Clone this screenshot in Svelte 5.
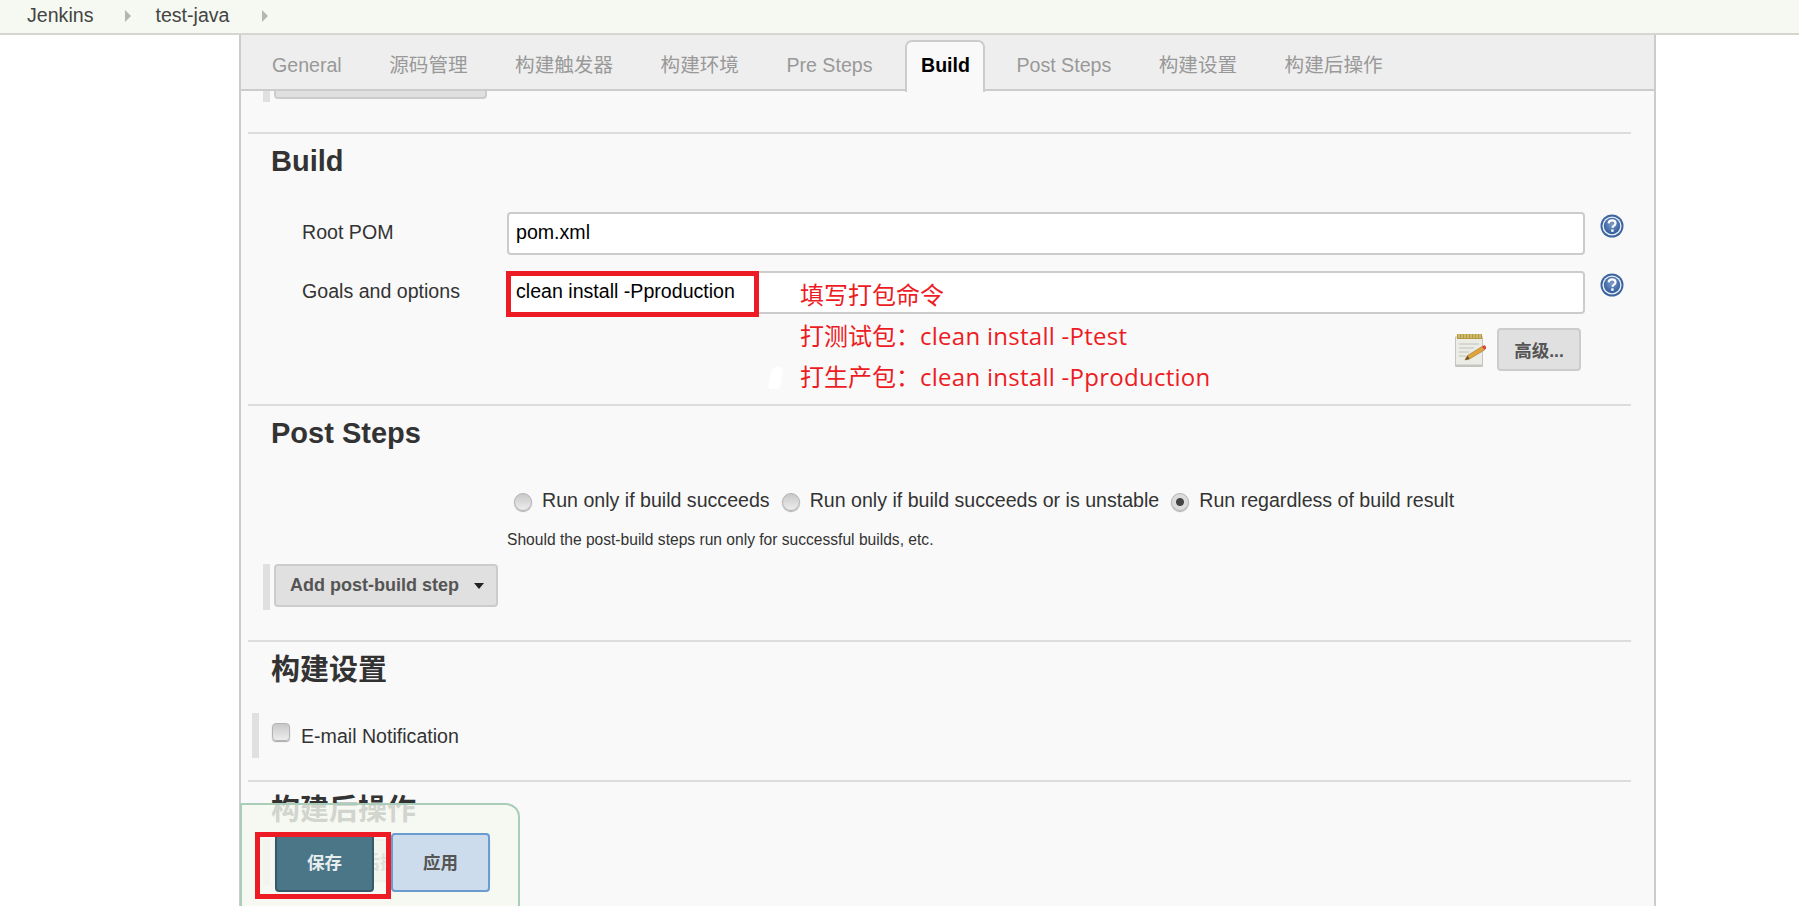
<script>
  const tabs = ['General', '源码管理', '构建触发器', '构建环境', 'Pre Steps', 'Build', 'Post Steps', '构建设置', '构建后操作'];
  const activeTab = 'Build';
  const radios = [
    { label: 'Run only if build succeeds', checked: false },
    { label: 'Run only if build succeeds or is unstable', checked: false },
    { label: 'Run regardless of build result', checked: true }
  ];
</script>

{#snippet helpIcon()}
  <svg class="help" viewBox="0 0 24 24" width="24" height="24" aria-hidden="true">
    <defs>
      <radialGradient id="helpfill" cx="50%" cy="40%" r="60%">
        <stop offset="0" stop-color="#7d9ccb" />
        <stop offset="1" stop-color="#2f5a9a" />
      </radialGradient>
    </defs>
    <circle cx="12" cy="12" r="11.5" fill="#3c659f" />
    <circle cx="12" cy="12" r="9.6" fill="#e8eef6" />
    <circle cx="12" cy="12" r="8.2" fill="url(#helpfill)" />
    <path d="M8.6 9.4c.2-2 1.7-3 3.5-3 2 0 3.4 1.1 3.4 2.8 0 1.4-.8 2-1.8 2.7-.8.5-1.1.9-1.1 1.9" fill="none" stroke="#fff" stroke-width="2.2" />
    <rect x="11.2" y="15.4" width="2.4" height="2.4" fill="#fff" />
  </svg>
{/snippet}

<header class="topbar">
  <span class="crumb">Jenkins</span>
  <span class="arrow"></span>
  <span class="crumb">test-java</span>
  <span class="arrow"></span>
</header>

<main class="panel">
  <nav class="tabbar">
    {#each tabs as tab (tab)}
      <span class="tab" class:active={tab === activeTab}>{tab}</span>
    {/each}
  </nav>

  <div class="content">
    <div class="stub"><span class="stub-btn"></span></div>

    <section>
      <h2>Build</h2>
      <div class="field first">
        <span class="label">Root POM</span>
        <input type="text" value="pom.xml" />
        {@render helpIcon()}
      </div>
      <div class="field">
        <span class="label">Goals and options</span>
        <input type="text" value="clean install -Pproduction" />
        {@render helpIcon()}
      </div>
      <div class="advanced">
        <svg class="notepad" viewBox="0 0 36 34" width="36" height="34" aria-hidden="true">
          <rect x="2" y="31" width="28" height="3" rx="1" fill="#c4c4be" />
          <rect x="2.500" y="4" width="27" height="28" fill="#ecece7" stroke="#c6c6be" />
          <rect x="4" y="1" width="25" height="5" fill="#b4993f" />
          <path d="M6 1v4M9 1v4M12 1v4M15 1v4M18 1v4M21 1v4M24 1v4M27 1v4" stroke="#e6d897" stroke-width="1" />
          <path d="M6 11h20M6 15h15M6 19h10M6 23h7" stroke="#cfcfc9" stroke-width="1.4" />
          <path d="M12 27l2.500-4.500L29 13.500l2.500 3.500L16.500 26z" fill="#dfa53c" stroke="#a4762a" stroke-width=".6" />
          <path d="M29 13.500l2-1.200c1-.4 2.500 1.800 2 3l-1.500 1.700z" fill="#d9483b" />
          <path d="M12 27l2.500-4.500 2 3.500z" fill="#6a5128" />
        </svg>
        <button class="btn adv-btn">高级...</button>
      </div>
    </section>

    <section>
      <h2>Post Steps</h2>
      <div class="radios">
        {#each radios as radio (radio.label)}
          <label class="radio">
            <input type="radio" name="post" checked={radio.checked} />
            <span>{radio.label}</span>
          </label>
        {/each}
      </div>
      <p class="hint">Should the post-build steps run only for successful builds, etc.</p>
      <div class="add-row">
        <button class="btn add-btn">Add post-build step<span class="caret"></span></button>
      </div>
    </section>

    <section>
      <h2 class="cjk">构建设置</h2>
      <label class="check">
        <input type="checkbox" />
        <span>E-mail Notification</span>
      </label>
    </section>

    <section>
      <h2 class="cjk">构建后操作</h2>
      <div class="add-row ghost">
        <button class="btn add-btn">增加构建后操作步骤</button>
      </div>
    </section>
  </div>
</main>

<!-- sticky save bar over the form -->
<div class="savebar">
  <button class="save">保存</button>
  <button class="apply">应用</button>
</div>

<!-- annotations drawn over the screenshot -->
<div class="mark goals-mark"></div>
<div class="mark save-mark"></div>
<div class="note note-1">填写打包命令</div>
<div class="note note-2">打测试包：<span class="latin">clean install -Ptest</span></div>
<div class="note note-3">打生产包：<span class="latin">clean install -Pproduction</span></div>
<div class="blob"></div>

<style>
  :global(body) {
    margin: 0;
    height: 906px;
    overflow: hidden;
    background: #fff;
    font-family: "Liberation Sans", "Noto Sans CJK SC", sans-serif;
    font-size: 19.6px;
    color: #333;
  }

  .topbar {
    display: flex;
    align-items: center;
    height: 31px;
    padding: 0 0 2px 27px;
    background: #f5f9f1;
    border-bottom: 2px solid #d3d7cf;
    color: #444;
  }

  .arrow {
    width: 0;
    height: 0;
    margin: 0 24px 0 32px;
    border-left: 6px solid #b5b5b5;
    border-top: 6px solid transparent;
    border-bottom: 6px solid transparent;
  }

  .panel {
    box-sizing: border-box;
    width: 1417px;
    height: 871px;
    margin-left: 239px;
    border-left: 2px solid #ccc;
    border-right: 2px solid #ccc;
    background: #f9f9f9;
    overflow: hidden;
  }

  .tabbar {
    display: flex;
    height: 54px;
    padding-left: 14px;
    background: #eee;
    border-bottom: 2px solid #ccc;
  }

  .tab {
    height: 50px;
    margin: 5px 12.5px 0 -1px;
    padding: 0 16px;
    line-height: 46px;
    color: #999;
    border: 2px solid transparent;
    border-bottom: 0;
  }

  .tab.active {
    background: #f9f9f9;
    color: #000;
    font-weight: bold;
    border-color: #ccc;
    border-radius: 7px 7px 0 0;
    margin-left: 2.5px;
    margin-right: 14px;
    padding: 0 13.5px;
  }

  .stub {
    height: 11px;
    margin: 0 0 30px 22px;
    padding-left: 4px;
    border-left: 7px solid #e0e0e0;
  }

  .stub-btn {
    display: block;
    box-sizing: border-box;
    width: 213px;
    height: 8px;
    background: #e0e0e0;
    border: 2px solid #ccc;
    border-top: 0;
    border-radius: 0 0 4px 4px;
  }

  section {
    margin: 0 23px 0 7px;
    border-top: 2px solid #ddd;
    padding-left: 23px;
  }

  h2 {
    margin: 7px 0 0;
    font-size: 29px;
    line-height: 40px;
    font-weight: bold;
    color: #333;
  }

  h2.cjk {
    margin-top: 8px;
  }

  .field {
    display: flex;
    align-items: flex-start;
    height: 43px;
    margin-top: 16px;
  }

  .field.first {
    margin-top: 31px;
  }

  .label {
    width: 236px;
    padding-left: 31px;
    box-sizing: border-box;
    line-height: 41px;
    color: #333;
  }

  input[type="text"] {
    box-sizing: border-box;
    width: 1078px;
    height: 43px;
    padding: 0 7px 2px;
    border: 2.5px solid #ccc;
    border-radius: 4px;
    background: #fff;
    font: inherit;
    color: #000;
    outline: none;
  }

  .help {
    margin: 2px 0 0 15px;
  }

  .advanced {
    display: flex;
    justify-content: flex-end;
    align-items: center;
    gap: 8px;
    height: 43px;
    margin: 14px 50px 33px 0;
  }

  .btn {
    box-sizing: border-box;
    height: 43px;
    background: #e0e0e0;
    border: 2.5px solid #ccc;
    border-radius: 4px;
    font-family: inherit;
    font-weight: bold;
    color: #555;
    padding: 0;
  }

  .adv-btn {
    width: 84px;
    font-size: 17.5px;
  }

  .radios {
    display: flex;
    height: 28px;
    margin: 33px 0 0 243px;
    gap: 12px;
  }

  .radio,
  .check {
    display: flex;
    align-items: center;
    line-height: 28px;
  }

  .radio input,
  .check input {
    appearance: none;
    box-sizing: border-box;
    margin: 3px 10px 0 0;
    width: 18px;
    height: 18px;
    border: 1px solid #b4b4b4;
    background: linear-gradient(#c8c8c8, #ededed);
    box-shadow: 0 1px 1px #aaa;
  }

  .radio input {
    border-radius: 50%;
  }

  .radio input:checked {
    background: radial-gradient(circle, #444 0 3.5px, #dcdcdc 4.5px);
  }

  .hint {
    margin: 15px 0 0 236px;
    font-size: 15.6px;
    line-height: 22px;
    color: #333;
  }

  .add-row {
    display: flex;
    box-sizing: border-box;
    height: 46px;
    margin: 13px 0 30px -8px;
    padding-left: 4px;
    border-left: 7px solid #e0e0e0;
  }

  .add-btn {
    display: flex;
    align-items: center;
    width: 224px;
    padding-left: 14px;
    font-size: 18px;
  }

  .caret {
    width: 0;
    height: 0;
    margin-left: 15px;
    border-top: 6px solid #222;
    border-left: 5.5px solid transparent;
    border-right: 5.5px solid transparent;
  }

  .check {
    height: 45px;
    margin: 23px 0 22px -19px;
    padding-left: 13px;
    border-left: 7px solid #e0e0e0;
  }

  .check input {
    margin: -8px 11px 0 0;
    border-radius: 4px;
  }

  .ghost {
    margin-top: 9px;
  }

  .ghost .add-btn {
    width: 217px;
    color: #777;
  }

  .savebar {
    position: absolute;
    left: 240px;
    top: 803px;
    box-sizing: border-box;
    display: flex;
    gap: 17px;
    width: 280px;
    height: 110px;
    padding: 28px 0 0 33px;
    background: rgba(245, 248, 240, 0.82);
    border: 2px solid #a9cdb8;
    border-radius: 0 14px 0 0;
  }

  .save,
  .apply {
    box-sizing: border-box;
    width: 99px;
    height: 59px;
    padding: 0 0 2px;
    border-radius: 4px;
    font-family: inherit;
    font-size: 17.5px;
    font-weight: bold;
  }

  .save {
    background: #4a7688;
    border: 2px solid #37596a;
    color: #e8eef0;
  }

  .apply {
    background: #ccdcec;
    border: 2px solid #6a9ccf;
    color: #555;
  }

  .mark {
    position: absolute;
    box-sizing: border-box;
    border: 5px solid #ed1c24;
  }

  .goals-mark {
    left: 506px;
    top: 271px;
    width: 253px;
    height: 46px;
  }

  .save-mark {
    left: 255px;
    top: 832px;
    width: 136px;
    height: 67px;
  }

  .note {
    position: absolute;
    left: 800px;
    font-family: "Open Sans", "Noto Sans CJK SC", sans-serif;
    font-size: 24px;
    line-height: 34px;
    color: #ed1c24;
    white-space: nowrap;
  }

  .latin {
    letter-spacing: 0.27px;
  }

  .note-1 { top: 278px; }
  .note-2 { top: 319px; }
  .note-3 { top: 360px; }

  .blob {
    position: absolute;
    left: 770px;
    top: 367px;
    width: 12px;
    height: 22px;
    background: #fff;
    border-radius: 6px 6px 3px 3px;
    transform: skewX(-10deg);
  }
</style>
